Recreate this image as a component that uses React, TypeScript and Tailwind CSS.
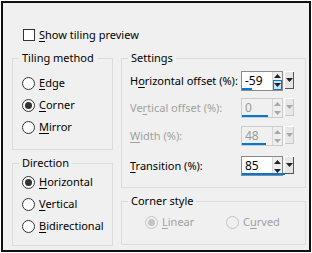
import React from "react";

function Mn({ pre = "", k, post = "" }: { pre?: string; k: string; post?: string }) {
  return (
    <span className="whitespace-nowrap">
      {pre}
      <span className="underline underline-offset-2 decoration-1">{k}</span>
      {post}
    </span>
  );
}

function Radio({
  checked,
  disabled,
  children,
}: {
  checked?: boolean;
  disabled?: boolean;
  children: React.ReactNode;
}) {
  return (
    <div className="flex h-[22px] items-center gap-[4px]">
      <span
        className={`flex h-[13px] w-[13px] shrink-0 items-center justify-center rounded-full border ${
          disabled ? "border-[#c4c4c4] bg-[#f0f0f0]" : "border-[#333333] bg-white"
        }`}
      >
        {checked && (
          <span className={`h-[7px] w-[7px] rounded-full ${disabled ? "bg-[#c4c4c4]" : "bg-[#333333]"}`} />
        )}
      </span>
      <span className={disabled ? "text-[#a0a0a0]" : "text-black"}>{children}</span>
    </div>
  );
}

function Group({
  title,
  className,
  inner,
  children,
}: {
  title: string;
  className: string;
  inner: string;
  children: React.ReactNode;
}) {
  return (
    <fieldset className={`border border-[#dcdcdc] ${className}`}>
      <legend className="ml-[6px] whitespace-nowrap px-[3px] leading-[14px] text-black">{title}</legend>
      <div className={inner}>{children}</div>
    </fieldset>
  );
}

function Tri({ down, color }: { down?: boolean; color: string }) {
  return (
    <svg width="7" height="4" viewBox="0 0 7 4">
      <path d={down ? "M0 0H7L3.5 4Z" : "M0 4H7L3.5 0Z"} fill={color} />
    </svg>
  );
}

function Spin({
  value,
  min,
  max,
  disabled,
  hover,
}: {
  value: number;
  min: number;
  max: number;
  disabled?: boolean;
  hover?: boolean;
}) {
  const bar = Math.round(((value - min) / (max - min)) * 51);
  const arrow = disabled ? "#a8a8a8" : "#222222";
  return (
    <div className="relative flex h-[20px] w-[53px] shrink-0">
      <div
        className={`flex flex-1 border ${
          disabled ? "border-[#cccccc] bg-[#f0f0f0]" : "border-[#8a8a8a] bg-white"
        }`}
      >
        <div
          className={`w-[30px] pl-[3px] text-[12px] leading-[18px] ${
            disabled ? "text-[#9a9a9a]" : "text-black"
          }`}
        >
          {value}
        </div>
        <div className="flex w-[10px] flex-col border-l border-[#d6d6d6] bg-[#eeeeee]">
          <div className="flex flex-1 items-center justify-center">
            <Tri color={arrow} />
          </div>
          <div
            className={`flex flex-1 items-center justify-center ${
              hover ? "border border-[#0078d7] bg-[#cce4f7]" : ""
            }`}
          >
            <Tri down color={arrow} />
          </div>
        </div>
      </div>
      <div
        className={`ml-[1px] flex h-[18px] w-[10px] items-start justify-center border-t border-l pt-[6px] ${
          disabled
            ? "border-[#ffffff] bg-[#e8e8e8] shadow-[inset_-1px_-1px_0_#c8c8c8]"
            : "border-[#ffffff] bg-[#e6e6e6] shadow-[inset_-1px_-1px_0_#555555]"
        }`}
      >
        <Tri down color={arrow} />
      </div>
      <div className="absolute bottom-[1px] left-[1px] h-[2px] bg-[#0078d7]" style={{ width: bar }} />
    </div>
  );
}

function Row({
  label,
  mt,
  disabled,
  children,
}: {
  label: React.ReactNode;
  mt: string;
  disabled?: boolean;
  children: React.ReactNode;
}) {
  return (
    <div className={`flex items-center ${mt}`}>
      <div className={`w-[111px] ${disabled ? "text-[#a0a0a0]" : "text-black"}`}>{label}</div>
      {children}
    </div>
  );
}

export default function App() {
  return (
    <div className="h-[253px] w-[312px] bg-white p-px font-['Noto_Sans',sans-serif] text-[11px] leading-[16px] text-black">
      <div className="flex h-[251px] flex-col border-2 border-[#111111] bg-[#f0f0f0]">
        <div className="ml-[20px] mt-[24px] flex h-[15px] items-center gap-[4px]">
          <span className="h-[12px] w-[12px] border border-[#333333] bg-white" />
          <Mn k="S" post="how tiling preview" />
        </div>

        <div className="ml-[9px] mt-[9px] flex gap-[8px]">
          <div className="flex w-[101px] flex-col gap-[6px]">
            <Group title="Tiling method" className="h-[99px]" inner="pl-[9px] pt-[7px]">
              <Radio>
                <Mn k="E" post="dge" />
              </Radio>
              <Radio checked>
                <Mn k="C" post="orner" />
              </Radio>
              <Radio>
                <Mn k="M" post="irror" />
              </Radio>
            </Group>
            <Group title="Direction" className="h-[90px]" inner="pl-[9px] pt-[1px]">
              <Radio checked>
                <Mn k="H" post="orizontal" />
              </Radio>
              <Radio>
                <Mn k="V" post="ertical" />
              </Radio>
              <Radio>
                <Mn k="B" post="idirectional" />
              </Radio>
            </Group>
          </div>

          <div className="flex w-[185px] flex-col gap-[6px]">
            <Group title="Settings" className="h-[137px]" inner="pl-[8px]">
              <Row label={<Mn pre="H" k="o" post="rizontal offset (%):" />} mt="mt-[6px]">
                <Spin value={-59} min={-100} max={100} hover />
              </Row>
              <Row label={<Mn pre="Ve" k="r" post="tical offset (%):" />} mt="mt-[7px]" disabled>
                <Spin value={0} min={-100} max={100} disabled />
              </Row>
              <Row label={<Mn k="W" post="idth (%):" />} mt="mt-[8px]" disabled>
                <Spin value={48} min={0} max={100} disabled />
              </Row>
              <Row label={<Mn k="T" post="ransition (%):" />} mt="mt-[10px]">
                <Spin value={85} min={0} max={100} />
              </Row>
            </Group>
            <Group title="Corner style" className="h-[51px]" inner="flex pl-[23px] pt-[3px]">
              <div className="w-[81px]">
                <Radio checked disabled>
                  <Mn k="L" post="inear" />
                </Radio>
              </div>
              <Radio disabled>
                <Mn pre="C" k="u" post="rved" />
              </Radio>
            </Group>
          </div>
        </div>
      </div>
    </div>
  );
}
